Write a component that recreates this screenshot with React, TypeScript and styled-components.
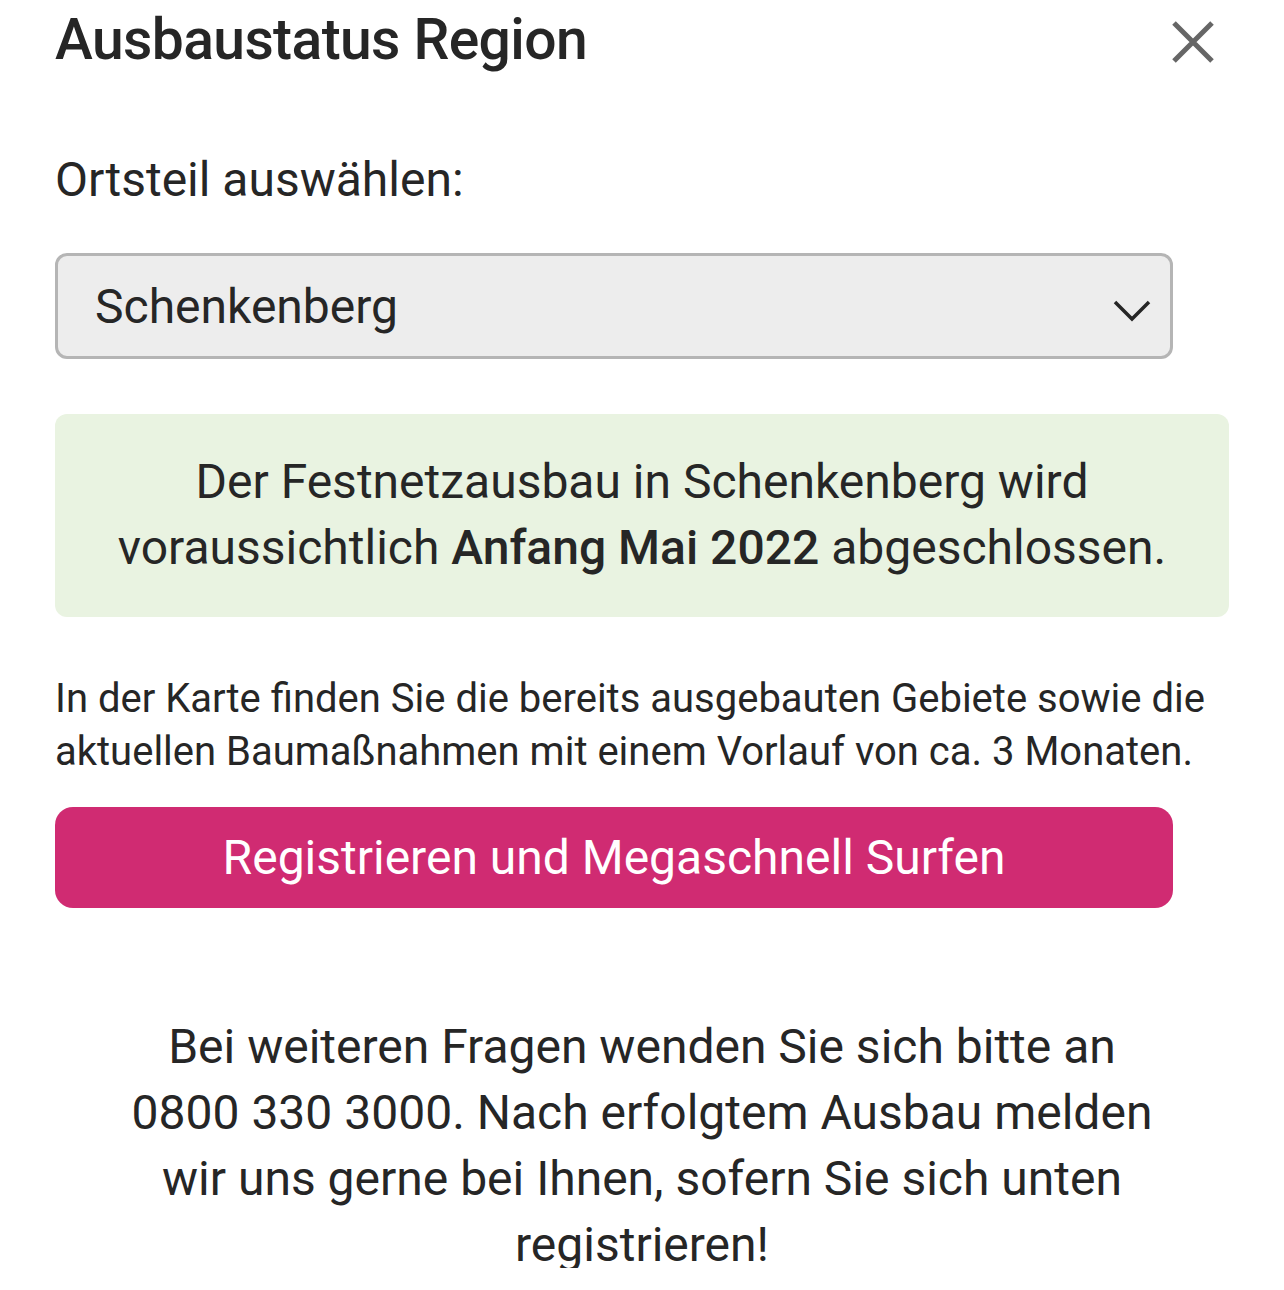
import styled, { createGlobalStyle } from 'styled-components'

const GlobalStyle = createGlobalStyle`
  html, body {
    margin: 0;
    padding: 0;
    background: #ffffff;
  }
  body {
    font-family: Roboto, "Noto Sans", sans-serif;
    color: #262626;
  }
`

const Sheet = styled.div`
  height: 1268px;
  overflow: hidden;
  padding: 0 55px;
  box-sizing: border-box;
`

const Header = styled.header`
  display: flex;
  justify-content: space-between;
  align-items: flex-start;
`

const Title = styled.h1`
  margin: 0;
  font-size: 57px;
  line-height: 80px;
  font-weight: 500;
  letter-spacing: -0.6px;
`

const CloseButton = styled.button`
  border: 0;
  background: none;
  padding: 0;
  margin: 20px 14px 0 0;
  width: 44px;
  height: 44px;
  display: flex;
  align-items: center;
  justify-content: center;
  cursor: pointer;
`

const Label = styled.div`
  margin-top: 70px;
  font-size: 48px;
  line-height: 60px;
`

const Select = styled.div`
  margin-top: 43px;
  width: 1118px;
  height: 106px;
  box-sizing: border-box;
  border: 3px solid #b5b5b5;
  border-radius: 12px;
  background: #ededed;
  display: flex;
  align-items: center;
  justify-content: space-between;
  padding: 0 18px 0 37px;
  font-size: 48px;

  svg {
    margin-top: 10px;
  }
`

const Notice = styled.div`
  margin-top: 55px;
  background: #e9f3e1;
  border-radius: 12px;
  padding: 35px 40px 36px;
  text-align: center;
  font-size: 48px;
  line-height: 66px;

  strong {
    font-weight: 500;
  }
`

const Info = styled.p`
  margin: 55px 0 0;
  font-size: 40px;
  line-height: 53px;
`

const PrimaryButton = styled.button`
  display: block;
  margin-top: 29px;
  width: 1118px;
  height: 101px;
  border: 0;
  border-radius: 18px;
  background: #d02b72;
  color: #ffffff;
  font-family: inherit;
  font-size: 48px;
  cursor: pointer;
`

const Footer = styled.p`
  margin: 106px 0 0;
  text-align: center;
  font-size: 48px;
  line-height: 66px;
  padding: 0 57px;
`

const CloseIcon = () => (
  <svg width="44" height="44" viewBox="0 0 44 44">
    <path d="M3 3 L41 41 M41 3 L3 41" stroke="#666666" strokeWidth="5" />
  </svg>
)

const Chevron = () => (
  <svg width="40" height="26" viewBox="0 0 40 26">
    <path d="M3 4 L20 21 L37 4" fill="none" stroke="#262626" strokeWidth="3.5" />
  </svg>
)

export default function App() {
  return (
    <>
      <GlobalStyle />
      <Sheet>
        <Header>
          <Title>Ausbaustatus Region</Title>
          <CloseButton aria-label="Schließen">
            <CloseIcon />
          </CloseButton>
        </Header>
        <Label>Ortsteil auswählen:</Label>
        <Select>
          <span>Schenkenberg</span>
          <Chevron />
        </Select>
        <Notice>
          Der Festnetzausbau in Schenkenberg wird voraussichtlich{' '}
          <strong>Anfang Mai 2022</strong> abgeschlossen.
        </Notice>
        <Info>
          In der Karte finden Sie die bereits ausgebauten Gebiete sowie die
          aktuellen Baumaßnahmen mit einem Vorlauf von ca. 3 Monaten.
        </Info>
        <PrimaryButton>Registrieren und Megaschnell Surfen</PrimaryButton>
        <Footer>
          Bei weiteren Fragen wenden Sie sich bitte an 0800 330 3000. Nach
          erfolgtem Ausbau melden wir uns gerne bei Ihnen, sofern Sie sich
          unten registrieren!
        </Footer>
      </Sheet>
    </>
  )
}
